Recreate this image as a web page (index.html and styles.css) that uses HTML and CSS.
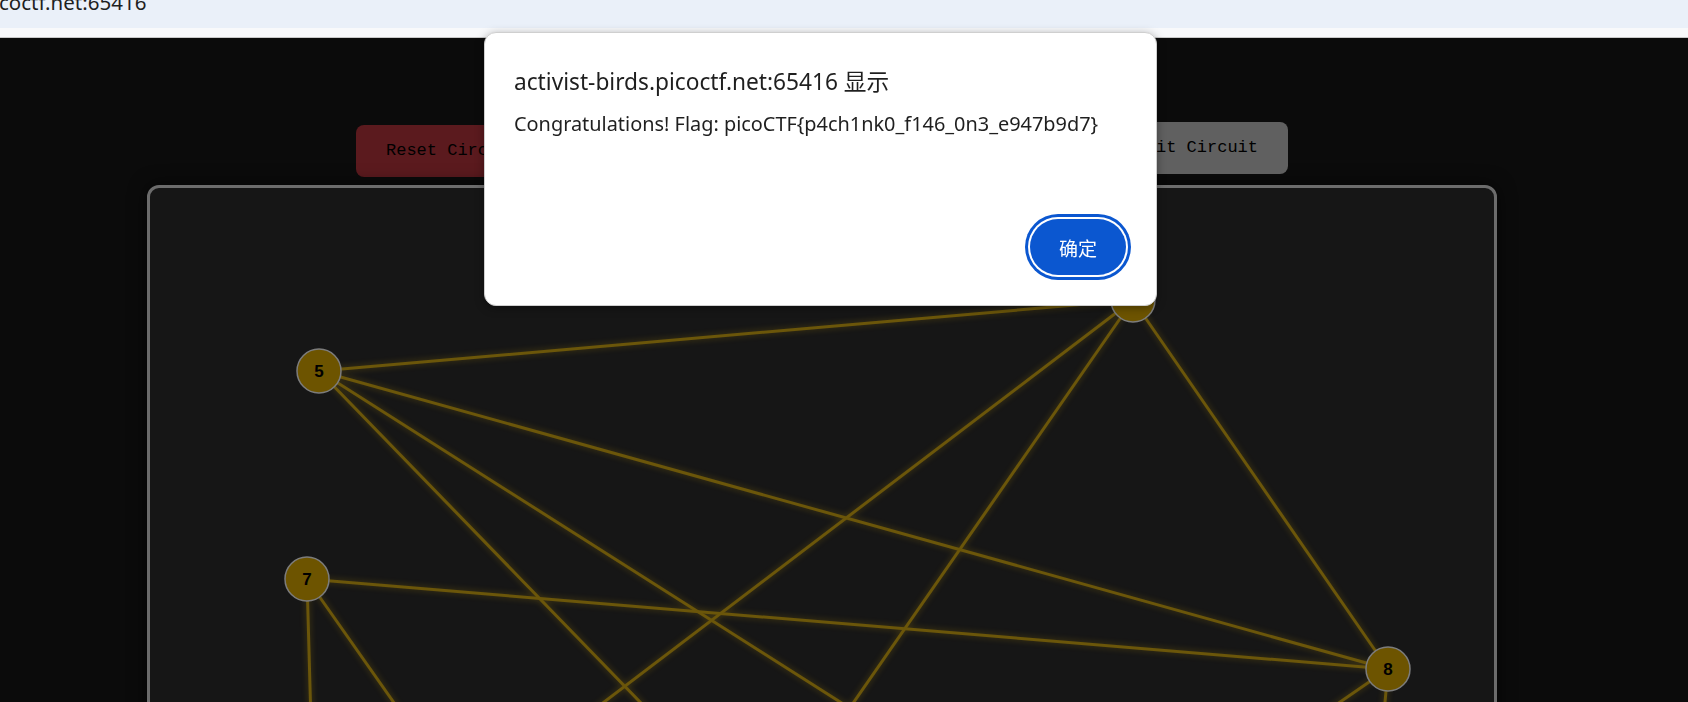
FILE: index.html
```html
<!DOCTYPE html>
<html lang="zh-CN">
<head>
<meta charset="utf-8">
<title>Circuit</title>
<link rel="stylesheet" href="styles.css">
</head>
<body>
<div class="browser-bar"><span class="url">coctf.net:65416</span></div>
<div class="browser-edge"></div>
<main class="page">
  <div class="app">
    <div class="controls">
      <button class="btn btn-reset">Reset Circuit</button>
      <button class="btn btn-submit is-hover">Submit Circuit</button>
    </div>
    <div class="board">
      <svg class="circuit" width="1344" height="634" viewBox="0 0 1344 634">
        <g class="wires">
          <line x1="169" y1="183" x2="983" y2="112"/>
          <line x1="169" y1="183" x2="1238" y2="481"/>
          <line x1="169" y1="183" x2="684" y2="714"/>
          <line x1="169" y1="183" x2="1005" y2="714"/>
          <line x1="157" y1="391" x2="1238" y2="481"/>
          <line x1="157" y1="391" x2="166" y2="714"/>
          <line x1="157" y1="391" x2="384" y2="714"/>
          <line x1="983" y1="112" x2="191" y2="714"/>
          <line x1="983" y1="112" x2="565" y2="714"/>
          <line x1="983" y1="112" x2="1238" y2="481"/>
          <line x1="1238" y1="481" x2="900" y2="714"/>
          <line x1="1238" y1="481" x2="1217" y2="714"/>
        </g>
        <g class="nodes">
          <g class="node"><circle cx="983" cy="112" r="22"/><text x="983" y="112">2</text></g>
          <g class="node"><circle cx="169" cy="183" r="22"/><text x="169" y="183">5</text></g>
          <g class="node"><circle cx="157" cy="391" r="22"/><text x="157" y="391">7</text></g>
          <g class="node"><circle cx="1238" cy="481" r="22"/><text x="1238" y="481">8</text></g>
        </g>
      </svg>
    </div>
  </div>
</main>
<div class="dialog" role="alertdialog">
  <div class="dialog-title">activist-birds.picoctf.net:65416 显示</div>
  <div class="dialog-msg">Congratulations! Flag: picoCTF{p4ch1nk0_f146_0n3_e947b9d7}</div>
  <div class="dialog-actions"><button class="dialog-ok">确定</button></div>
</div>
</body>
</html>
```

FILE: styles.css
```css
html, body {
  margin: 0;
  padding: 0;
  width: 1688px;
  height: 702px;
  overflow: hidden;
  background: #0b0b0b;
}

.browser-bar {
  height: 28px;
  background: #eaf0f9;
  overflow: hidden;
}

.url {
  display: block;
  margin-top: -9px;
  margin-left: -1px;
  font-family: "Noto Sans", "Open Sans", sans-serif;
  font-size: 20.5px;
  line-height: 22px;
  color: #1f1f1f;
  white-space: nowrap;
}

.browser-edge {
  height: 9px;
  background: #f8f9fb;
  border-bottom: 1px solid #c9c9c9;
}

.page {
  display: flex;
  justify-content: center;
  padding: 87px 44px 0 0;
  background: #0b0b0b;
}

.app {
  width: 1350px;
  display: flex;
  flex-direction: column;
}

.controls {
  display: flex;
  justify-content: space-between;
  align-items: flex-start;
  padding: 0 209px;
}

.btn {
  font-family: "Liberation Mono", "DejaVu Sans Mono", monospace;
  font-size: 17px;
  line-height: 20px;
  padding: 16px 30px;
  border: none;
  border-radius: 8px;
  color: #000;
  cursor: pointer;
}

.btn-reset {
  background: #5b1a1e;
}

.btn-submit {
  background: #606060;
}

.btn.is-hover {
  transform: translateY(-3px);
}

.board {
  margin-top: 8px;
  height: 640px;
  border: 3px solid #6c6c6c;
  border-radius: 12px;
  background: #161616;
  overflow: hidden;
  box-shadow: 0 0 18px rgba(0, 0, 0, 0.6);
}

.circuit {
  display: block;
}

.wires line {
  stroke: #6b560a;
  stroke-width: 3;
  stroke-linecap: round;
}

.wires {
  filter: drop-shadow(0 0 3px rgba(255, 200, 0, 0.25));
}

.node circle {
  fill: #6d5400;
  stroke: #7c7c7c;
  stroke-width: 1.5;
}

.node text {
  font-family: "Liberation Sans", Arial, sans-serif;
  font-weight: bold;
  font-size: 17px;
  fill: #000;
  text-anchor: middle;
  dominant-baseline: central;
}

.dialog {
  position: fixed;
  left: 484px;
  top: 32px;
  width: 673px;
  height: 274px;
  box-sizing: border-box;
  padding: 35px 30px 30px 29px;
  background: #fff;
  border: 1px solid #cfcfcf;
  border-radius: 12px;
  box-shadow: 0 2px 10px rgba(0, 0, 0, 0.35);
  display: flex;
  flex-direction: column;
  font-family: "Noto Sans", "Noto Sans CJK SC", sans-serif;
  color: #1f1f1f;
}

.dialog-title {
  font-family: "Noto Sans", "Noto Sans CJK SC", sans-serif;
  font-size: 22.7px;
  line-height: 28px;
}

.dialog-msg {
  margin-top: 16px;
  font-size: 19.9px;
  line-height: 24px;
}

.dialog-actions {
  margin-top: auto;
  display: flex;
  justify-content: flex-end;
}

.dialog-ok {
  width: 96px;
  height: 56px;
  border: none;
  border-radius: 28px;
  background: #0b57d0;
  color: #fff;
  font-family: "Noto Sans CJK SC", sans-serif;
  font-size: 19px;
  box-shadow: 0 0 0 2px #fff, 0 0 0 5px #0b57d0;
  cursor: pointer;
}
```
